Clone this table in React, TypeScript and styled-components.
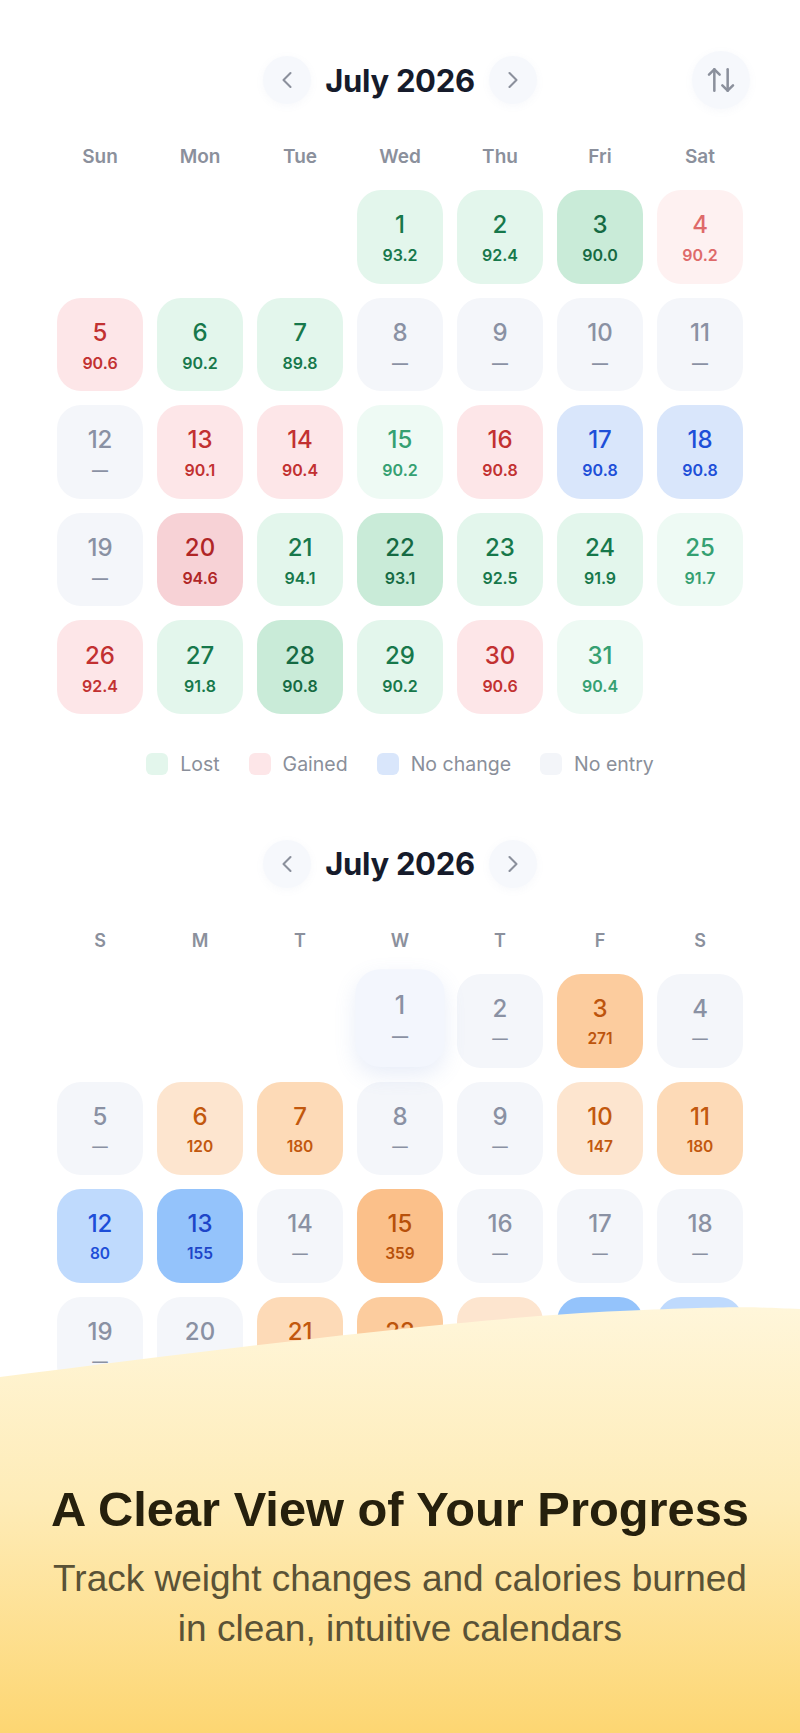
import React from "react";
import styled, { createGlobalStyle } from "styled-components";
import { ChevronLeft, ChevronRight, ArrowUpDown } from "lucide-react";

// two month calendars (weight + calories) with a promo footer over the bottom

const GlobalStyle = createGlobalStyle`
  html, body {
    margin: 0;
    padding: 0;
    background: #ffffff;
  }
  body {
    font-family: Inter, "Noto Sans", sans-serif;
  }
`;

type Tone = "lost" | "gained" | "same" | "none" | "burn" | "cool";

type Day = {
  day: number;
  tone: Tone;
  level?: number;
  value?: string;
  selected?: boolean;
};

const palette: Record<Tone, { bg: string; fg: string }[]> = {
  lost: [
    { bg: "#eefaf4", fg: "#35a072" },
    { bg: "#e3f6ec", fg: "#17784b" },
    { bg: "#c9ebd8", fg: "#156a43" },
  ],
  gained: [
    { bg: "#fef1f1", fg: "#de6a6a" },
    { bg: "#fde6e8", fg: "#c23131" },
    { bg: "#f7d2d6", fg: "#b02626" },
  ],
  same: [{ bg: "#d9e6fb", fg: "#1e4fd8" }],
  none: [{ bg: "#f4f6fa", fg: "#8a91a3" }],
  burn: [
    { bg: "#fde5cf", fg: "#c2580e" },
    { bg: "#fddab7", fg: "#c2580e" },
    { bg: "#fccc9e", fg: "#bd540c" },
    { bg: "#fbc08a", fg: "#b7500a" },
  ],
  cool: [
    { bg: "#bfdafd", fg: "#1d4ed8" },
    { bg: "#94c3fb", fg: "#1d45c8" },
  ],
};

const weightDays: Day[] = [
  { day: 1, tone: "lost", level: 1, value: "93.2" },
  { day: 2, tone: "lost", level: 1, value: "92.4" },
  { day: 3, tone: "lost", level: 2, value: "90.0" },
  { day: 4, tone: "gained", level: 0, value: "90.2" },
  { day: 5, tone: "gained", level: 1, value: "90.6" },
  { day: 6, tone: "lost", level: 1, value: "90.2" },
  { day: 7, tone: "lost", level: 1, value: "89.8" },
  { day: 8, tone: "none" },
  { day: 9, tone: "none" },
  { day: 10, tone: "none" },
  { day: 11, tone: "none" },
  { day: 12, tone: "none" },
  { day: 13, tone: "gained", level: 1, value: "90.1" },
  { day: 14, tone: "gained", level: 1, value: "90.4" },
  { day: 15, tone: "lost", level: 0, value: "90.2" },
  { day: 16, tone: "gained", level: 1, value: "90.8" },
  { day: 17, tone: "same", value: "90.8" },
  { day: 18, tone: "same", value: "90.8" },
  { day: 19, tone: "none" },
  { day: 20, tone: "gained", level: 2, value: "94.6" },
  { day: 21, tone: "lost", level: 1, value: "94.1" },
  { day: 22, tone: "lost", level: 2, value: "93.1" },
  { day: 23, tone: "lost", level: 1, value: "92.5" },
  { day: 24, tone: "lost", level: 1, value: "91.9" },
  { day: 25, tone: "lost", level: 0, value: "91.7" },
  { day: 26, tone: "gained", level: 1, value: "92.4" },
  { day: 27, tone: "lost", level: 1, value: "91.8" },
  { day: 28, tone: "lost", level: 2, value: "90.8" },
  { day: 29, tone: "lost", level: 1, value: "90.2" },
  { day: 30, tone: "gained", level: 1, value: "90.6" },
  { day: 31, tone: "lost", level: 0, value: "90.4" },
];

const calorieDays: Day[] = [
  { day: 1, tone: "none", selected: true },
  { day: 2, tone: "none" },
  { day: 3, tone: "burn", level: 2, value: "271" },
  { day: 4, tone: "none" },
  { day: 5, tone: "none" },
  { day: 6, tone: "burn", level: 0, value: "120" },
  { day: 7, tone: "burn", level: 1, value: "180" },
  { day: 8, tone: "none" },
  { day: 9, tone: "none" },
  { day: 10, tone: "burn", level: 0, value: "147" },
  { day: 11, tone: "burn", level: 1, value: "180" },
  { day: 12, tone: "cool", level: 0, value: "80" },
  { day: 13, tone: "cool", level: 1, value: "155" },
  { day: 14, tone: "none" },
  { day: 15, tone: "burn", level: 3, value: "359" },
  { day: 16, tone: "none" },
  { day: 17, tone: "none" },
  { day: 18, tone: "none" },
  { day: 19, tone: "none" },
  { day: 20, tone: "none" },
  { day: 21, tone: "burn", level: 1, value: "210" },
  { day: 22, tone: "burn", level: 2, value: "265" },
  { day: 23, tone: "burn", level: 0, value: "140" },
  { day: 24, tone: "cool", level: 1, value: "150" },
  { day: 25, tone: "cool", level: 0, value: "95" },
  { day: 26, tone: "none" },
  { day: 27, tone: "burn", level: 0, value: "130" },
  { day: 28, tone: "none" },
  { day: 29, tone: "burn", level: 1, value: "190" },
  { day: 30, tone: "none" },
  { day: 31, tone: "none" },
];

const legend = [
  { label: "Lost", color: "#e3f6ec" },
  { label: "Gained", color: "#fde6e8" },
  { label: "No change", color: "#d9e6fb" },
  { label: "No entry", color: "#f3f5f9" },
];

const Page = styled.div`
  position: relative;
  width: 800px;
  height: 1733px;
  overflow: hidden;
  background: #ffffff;
  padding-top: 50px;
  box-sizing: border-box;
`;

const Section = styled.section<{ $gap?: number }>`
  display: flex;
  flex-direction: column;
  align-items: center;
  margin-top: ${(p) => p.$gap ?? 0}px;
`;

const Header = styled.div`
  display: grid;
  grid-template-columns: 1fr auto 1fr;
  align-items: center;
  width: 700px;
  height: 60px;
`;

const NavGroup = styled.div`
  grid-column: 2;
  display: flex;
  align-items: center;
  gap: 14px;
`;

const RoundButton = styled.button<{ $size: number }>`
  width: ${(p) => p.$size}px;
  height: ${(p) => p.$size}px;
  border-radius: 50%;
  border: none;
  padding: 0;
  background: #f6f8fc;
  box-shadow: 0 2px 8px rgba(120, 140, 180, 0.06);
  color: #8b909c;
  display: flex;
  align-items: center;
  justify-content: center;
`;

const SortSlot = styled.div`
  grid-column: 3;
  justify-self: end;
`;

const MonthTitle = styled.h2`
  margin: 0;
  font-family: Inter, sans-serif;
  font-size: 31px;
  font-weight: 700;
  color: #161b2b;
  letter-spacing: -0.3px;
`;

const WeekRow = styled.div`
  display: grid;
  grid-template-columns: repeat(7, 86px);
  column-gap: 14px;
  margin-top: 35px;
  height: 24px;
`;

const WeekLabel = styled.div<{ $small?: boolean }>`
  text-align: center;
  font-size: ${(p) => (p.$small ? 18 : 19)}px;
  line-height: 24px;
  font-weight: 600;
  color: #8b909c;
`;

const Grid = styled.div`
  display: grid;
  grid-template-columns: repeat(7, 86px);
  grid-auto-rows: 93.6px;
  column-gap: 14px;
  row-gap: 14px;
  margin-top: 21px;
`;

const Cell = styled.div<{ $bg: string; $fg: string; $lifted?: boolean }>`
  border-radius: 24px;
  background: ${(p) => p.$bg};
  color: ${(p) => p.$fg};
  display: flex;
  flex-direction: column;
  align-items: center;
  justify-content: center;
  gap: 6px;
  padding-top: 3px;
  box-sizing: border-box;
  ${(p) =>
    p.$lifted
      ? `
    transform: translateY(-3px) scale(1.04);
    box-shadow: 0 8px 20px rgba(110, 140, 210, 0.16);
    background: #f3f6fd;
  `
      : ""}
`;

const DayNum = styled.span`
  font-size: 24px;
  line-height: 28px;
  font-weight: 500;
`;

const DayValue = styled.span<{ $size: number }>`
  font-size: ${(p) => p.$size}px;
  line-height: 20px;
  font-weight: 600;
`;

const Legend = styled.div`
  display: flex;
  align-items: center;
  gap: 29px;
  margin-top: 38px;
  height: 24px;
`;

const LegendItem = styled.div`
  display: flex;
  align-items: center;
  gap: 12px;
  font-size: 19.5px;
  color: #8a8f9a;
`;

const Swatch = styled.span<{ $color: string }>`
  width: 22px;
  height: 22px;
  border-radius: 6px;
  background: ${(p) => p.$color};
`;

const Footer = styled.footer`
  position: absolute;
  left: 0;
  right: 0;
  bottom: 0;
  height: 428px;
  display: flex;
  flex-direction: column;
  align-items: center;
  padding-top: 176px;
  box-sizing: border-box;
`;

const Wave = styled.svg`
  position: absolute;
  inset: 0;
  width: 100%;
  height: 100%;
  z-index: 0;
`;

const Headline = styled.h1`
  position: relative;
  margin: 0;
  font-family: "Liberation Sans", Arial, sans-serif;
  font-size: 48.8px;
  line-height: 56px;
  font-weight: 700;
  color: #26200d;
  text-align: center;
`;

const Subline = styled.p`
  position: relative;
  margin: 17px 0 0;
  font-family: "Liberation Sans", Arial, sans-serif;
  font-size: 37px;
  line-height: 50px;
  color: #5a5236;
  text-align: center;
`;

const CalendarGrid = ({ days, lead, valueSize }: { days: Day[]; lead: number; valueSize: number }) => (
  <Grid>
    {Array.from({ length: lead }).map((_, i) => (
      <div key={`e${i}`} />
    ))}
    {days.map((d) => {
      const set = palette[d.tone];
      const c = set[Math.min(d.level ?? 0, set.length - 1)];
      return (
        <Cell key={d.day} $bg={c.bg} $fg={c.fg} $lifted={d.selected}>
          <DayNum>{d.day}</DayNum>
          <DayValue $size={valueSize}>{d.value ?? "—"}</DayValue>
        </Cell>
      );
    })}
  </Grid>
);

const MonthHeader = ({ withSort }: { withSort?: boolean }) => (
  <Header>
    <NavGroup>
      <RoundButton $size={48}>
        <ChevronLeft size={28} strokeWidth={1.8} />
      </RoundButton>
      <MonthTitle>July 2026</MonthTitle>
      <RoundButton $size={48}>
        <ChevronRight size={28} strokeWidth={1.8} />
      </RoundButton>
    </NavGroup>
    {withSort && (
      <SortSlot>
        <RoundButton $size={58}>
          <ArrowUpDown size={32} strokeWidth={1.9} />
        </RoundButton>
      </SortSlot>
    )}
  </Header>
);

const App = (): JSX.Element => {
  return (
    <Page>
      <GlobalStyle />
      <Section>
        <MonthHeader withSort />
        <WeekRow>
          {["Sun", "Mon", "Tue", "Wed", "Thu", "Fri", "Sat"].map((w) => (
            <WeekLabel key={w}>{w}</WeekLabel>
          ))}
        </WeekRow>
        <CalendarGrid days={weightDays} lead={3} valueSize={16} />
        <Legend>
          {legend.map((l) => (
            <LegendItem key={l.label}>
              <Swatch $color={l.color} />
              {l.label}
            </LegendItem>
          ))}
        </Legend>
      </Section>

      <Section $gap={58}>
        <MonthHeader />
        <WeekRow>
          {["S", "M", "T", "W", "T", "F", "S"].map((w, i) => (
            <WeekLabel key={i} $small>
              {w}
            </WeekLabel>
          ))}
        </WeekRow>
        <CalendarGrid days={calorieDays} lead={3} valueSize={15.5} />
      </Section>

      <Footer>
        <Wave viewBox="0 0 800 428" preserveAspectRatio="none">
          <defs>
            <linearGradient id="sunny" x1="0" y1="0" x2="0" y2="1">
              <stop offset="0" stopColor="#fff6da" />
              <stop offset="0.45" stopColor="#feecb8" />
              <stop offset="1" stopColor="#fdd672" />
            </linearGradient>
          </defs>
          <path d="M0,72 C250,40 480,12 620,6 S760,3 800,4 L800,428 L0,428 Z" fill="url(#sunny)" />
        </Wave>
        <Headline>A Clear View of Your Progress</Headline>
        <Subline>
          Track weight changes and calories burned
          <br />
          in clean, intuitive calendars
        </Subline>
      </Footer>
    </Page>
  );
};

export default App;
